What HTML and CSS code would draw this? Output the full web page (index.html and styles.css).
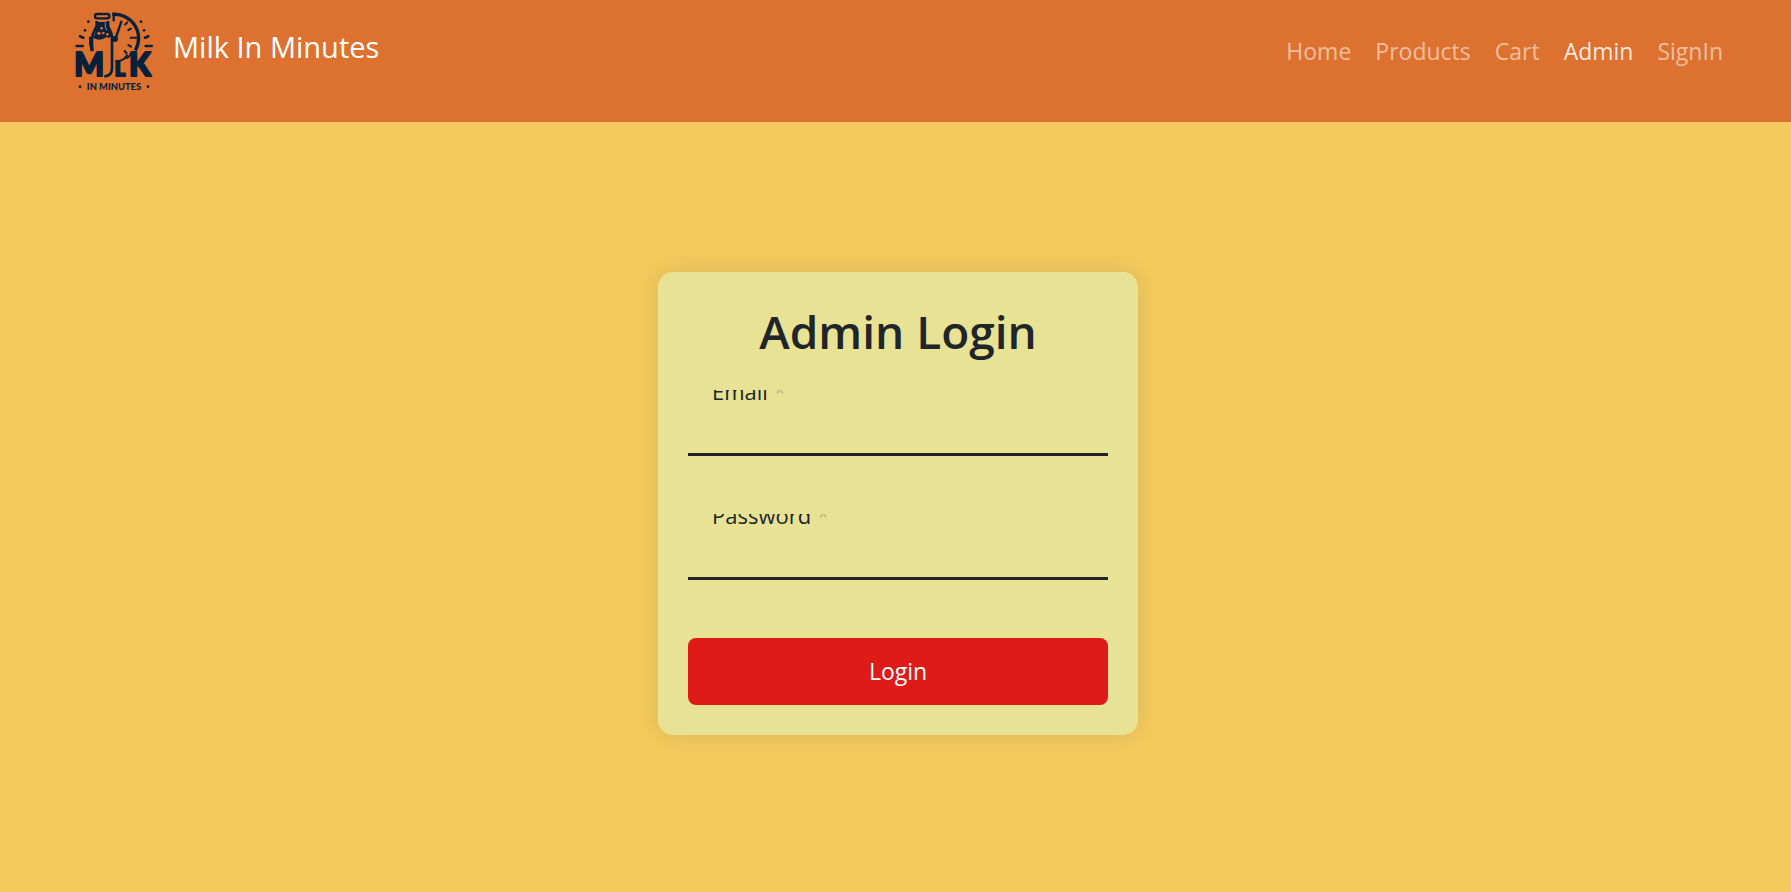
FILE: index.html
```html
<!DOCTYPE html>
<html lang="en">
<head>
<meta charset="utf-8">
<meta name="viewport" content="width=device-width, initial-scale=1">
<title>Milk In Minutes</title>
<link rel="stylesheet" href="styles.css">
</head>
<body>
<header class="navbar">
  <a class="brand" href="#">
    <svg class="logo" viewBox="36 24 252 252" aria-hidden="true">
      <g fill="none" stroke="#08203a" stroke-width="10">
        <path d="M157 43A72 72 0 0 1 226 151"/>
        <path d="M92 111Q90 133 97 152"/>
        <path d="M161 38V64" stroke-width="7"/>
        <path d="M166 117L184 65" stroke-width="7" stroke-linecap="round"/>
        <path d="M195 74L202 67M205 90L213 86M212 113H234M205 135L213 140M194 153L200 160" stroke-width="6" stroke-linecap="round"/>
        <rect x="105" y="42" width="43" height="13" rx="6" stroke-width="7"/>
        <path d="M110 63V77C109 88 96 94 96 119V154M144 63V77C146 88 156 94 156 112V205Q156 229 133 229" stroke-width="8"/>
        <path d="M60 109L70 113M50 138H68M265 109L255 113M257 138H275" stroke-width="8" stroke-linecap="round"/>
        <path d="M166 184Q194 184 202 164M195 169Q204 182 214 157" stroke-width="6"/>
      </g>
      <g fill="#08203a">
        <path d="M110 66H144V81L154 104Q154 116 139 112Q119 125 101 114L110 84Z"/>
        <circle cx="165" cy="117" r="9"/>
        <circle cx="85" cy="65" r="4"/><circle cx="75" cy="91" r="4"/>
        <circle cx="243" cy="65" r="4"/><circle cx="252" cy="91" r="4"/>
        <circle cx="60" cy="260" r="4"/><circle cx="264" cy="260" r="4"/>
      </g>
      <g fill="#dd7230">
        <circle cx="125" cy="85" r="4"/><circle cx="117" cy="100" r="5"/>
        <circle cx="130" cy="99" r="4"/><circle cx="142" cy="103" r="4"/>
      </g>
      <path d="M136 68V82L141 91" fill="none" stroke="#9a9192" stroke-width="3"/>
      <g class="logo-letters">
        <text x="43" y="227">M</text>
        <text x="164" y="227" class="logo-small">L</text>
        <text x="207" y="227">K</text>
      </g>
      <text x="162" y="269" text-anchor="middle" class="logo-caption">IN MINUTES</text>
    </svg>
    <span>Milk In Minutes</span>
  </a>
  <nav class="nav">
    <a href="#">Home</a>
    <a href="#">Products</a>
    <a href="#">Cart</a>
    <a href="#" class="active" aria-current="page">Admin</a>
    <a href="#">SignIn</a>
  </nav>
</header>
<main class="page">
  <form class="card">
    <h1>Admin Login</h1>
    <div class="field">
      <input id="email" type="email" required>
      <label for="email">Email <span class="required">*</span></label>
    </div>
    <div class="field">
      <input id="password" type="password" required>
      <label for="password">Password <span class="required">*</span></label>
    </div>
    <button type="submit">Login</button>
  </form>
</main>
</body>
</html>
```
FILE: styles.css
```css
* { box-sizing: border-box; }

body {
  margin: 0;
  min-height: 100vh;
  display: flex;
  flex-direction: column;
  background: #f4ca5e;
  color: #212529;
  font-family: "Open Sans", "Noto Sans", sans-serif;
}

.navbar {
  display: flex;
  justify-content: space-between;
  align-items: flex-start;
  padding: 8px 68px 28px 72px;
  background: #dd7230;
}

.brand {
  display: flex;
  gap: 17px;
  color: #fff;
  font-size: 29px;
  line-height: 78px;
  text-decoration: none;
}

.logo { width: 84px; height: 84px; }

.logo-letters {
  fill: #08203a;
  stroke: #08203a;
  stroke-width: 6px;
  stroke-linejoin: round;
  font: 900 94px Lato, sans-serif;
}

.logo-small { font-size: 60px; }

.logo-caption {
  fill: #08203a;
  font: 900 28px Lato, sans-serif;
}

.nav {
  display: flex;
  gap: 24px;
  font-size: 23px;
  line-height: 86px;
}

.nav a {
  color: rgba(255, 255, 255, 0.55);
  text-decoration: none;
}

.nav .active { color: rgba(255, 255, 255, 0.85); }

.page {
  flex: 1;
  display: flex;
  align-items: center;
  justify-content: center;
  padding: 0 0 7px 5px;
}

.card {
  width: 480px;
  max-width: 100%;
  padding: 30px;
  border-radius: 15px;
  background: #e8e294;
  box-shadow: 0 0 24px rgba(0, 0, 0, 0.1);
}

.card h1 {
  margin: 0 0 30px;
  font-size: 46px;
  line-height: 58px;
  font-weight: 600;
  text-align: center;
}

.field {
  position: relative;
  margin-bottom: 58px;
}

.field input {
  display: block;
  width: 100%;
  height: 66px;
  padding: 16px 24px 0;
  border: 0;
  border-bottom: 3px solid #212529;
  outline: 0;
  background: transparent;
  color: inherit;
  font: inherit;
  font-size: 22px;
}

.field label {
  position: absolute;
  top: 0;
  left: 24px;
  height: 16px;
  overflow: hidden;
  font-size: 22px;
  line-height: 3px;
}

.required { opacity: 0.2; }

.card button {
  display: block;
  width: 100%;
  padding: 15px;
  border: 0;
  border-radius: 8px;
  background: #de1b19;
  color: #fff;
  font: inherit;
  font-size: 23px;
  line-height: 37px;
}
```
